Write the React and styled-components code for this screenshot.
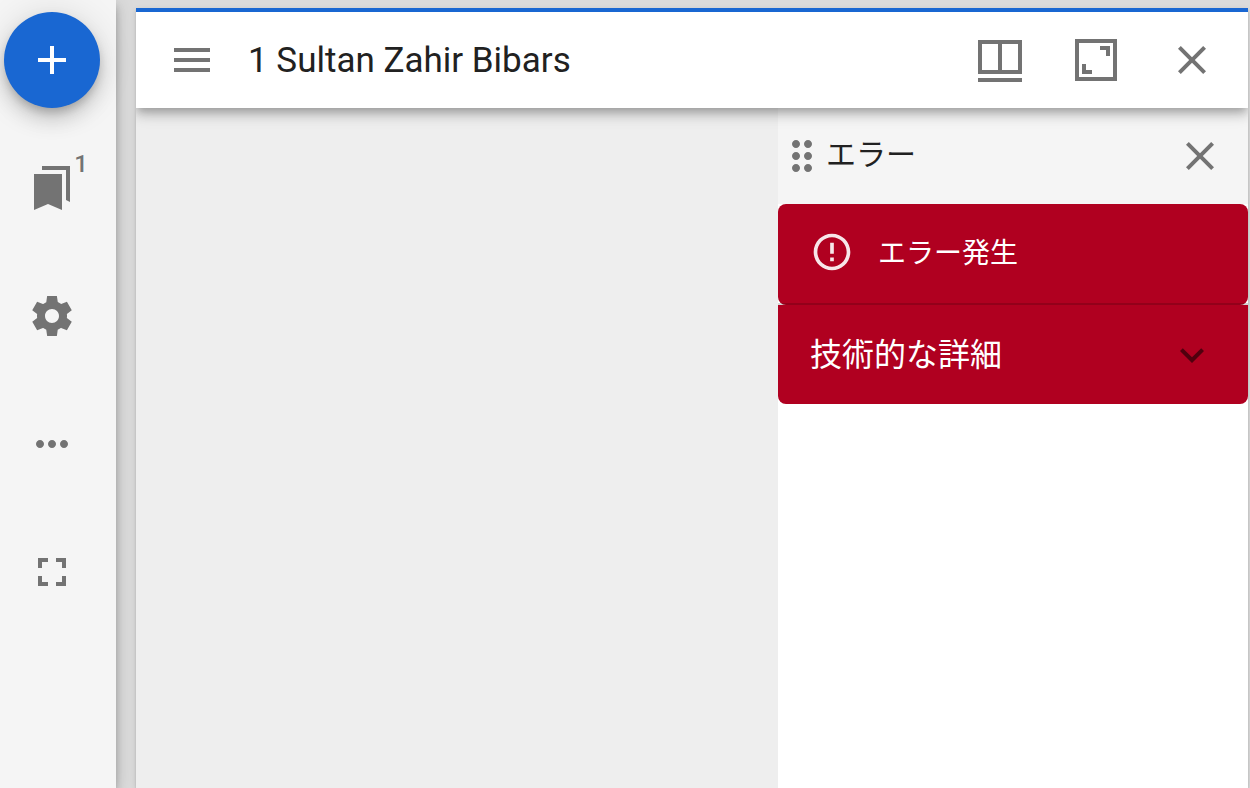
import React from 'react';
import styled, { createGlobalStyle } from 'styled-components';

const GlobalStyle = createGlobalStyle`
  *, *::before, *::after { box-sizing: border-box; }
  body {
    margin: 0;
    background: #dbdbdb;
    color: #212121;
    font-family: Roboto, "Noto Sans CJK JP", sans-serif;
  }
  h2, h3, p { margin: 0; font-weight: 400; }
`;

const Workspace = styled.div`
  display: flex;
  min-height: 100vh;
  overflow: hidden;
`;

const Sidebar = styled.nav`
  position: relative;
  z-index: 2;
  flex: 0 0 116px;
  display: flex;
  flex-direction: column;
  gap: 32px;
  padding: 12px 16px 12px 4px;
  background: #f5f5f5;
  box-shadow: 0 4px 8px -2px rgba(0, 0, 0, 0.2), 0 8px 10px rgba(0, 0, 0, 0.14),
    0 2px 20px rgba(0, 0, 0, 0.12);
`;

const IconButton = styled.button`
  position: relative;
  flex: none;
  display: flex;
  align-items: center;
  justify-content: center;
  width: 96px;
  height: 96px;
  padding: 0;
  border: 0;
  border-radius: 50%;
  background: transparent;
  color: #737373;
  cursor: pointer;
`;

const AddButton = styled(IconButton)`
  background: #1967d2;
  color: #fff;
  box-shadow: 0 6px 10px -2px rgba(0, 0, 0, 0.2), 0 12px 20px rgba(0, 0, 0, 0.14),
    0 2px 36px rgba(0, 0, 0, 0.12);
`;

const DragButton = styled(IconButton)`
  width: 48px;
  cursor: move;
`;

const Badge = styled.span`
  position: absolute;
  top: 10px;
  right: 12px;
  font-family: Roboto, sans-serif;
  font-size: 24px;
  font-weight: 500;
  line-height: 28px;
`;

const Icon = styled.svg`
  display: block;
  flex: none;
  width: ${(p) => p.$size || 48}px;
  height: ${(p) => p.$size || 48}px;
  fill: currentColor;
`;

const Main = styled.main`
  flex: 1;
  min-width: 0;
  display: flex;
  padding: 8px 2px 0 20px;
`;

const Window = styled.section`
  flex: 1;
  min-width: 0;
  display: flex;
  flex-direction: column;
  background: #eee;
  box-shadow: 0 4px 2px -2px rgba(0, 0, 0, 0.2), 0 2px 2px rgba(0, 0, 0, 0.14),
    0 2px 6px rgba(0, 0, 0, 0.12);
  clip-path: inset(-8px -8px 0 -8px);
`;

const TopBar = styled.header`
  position: relative;
  z-index: 1;
  display: flex;
  align-items: center;
  height: 100px;
  padding: 0 8px;
  border-top: 4px solid #1967d2;
  background: #fff;
  box-shadow: 0 4px 8px -2px rgba(0, 0, 0, 0.2), 0 8px 10px rgba(0, 0, 0, 0.14),
    0 2px 20px rgba(0, 0, 0, 0.12);
  clip-path: inset(0 0 -32px 0);
`;

const WindowTitle = styled.h2`
  flex: 1;
  min-width: 0;
  padding: 2px 0 0 8px;
  overflow: hidden;
  font-size: 35px;
  line-height: 48px;
  text-overflow: ellipsis;
  white-space: nowrap;
`;

const WindowBody = styled.div`
  flex: 1;
  display: flex;
`;

const Viewer = styled.div`
  flex: 1;
  min-width: 0;
`;

const Panel = styled.aside`
  flex: 0 0 470px;
  background: #fff;
`;

const PanelHeader = styled.header`
  display: flex;
  align-items: center;
  height: 96px;
  background: #f5f5f5;
`;

const PanelTitle = styled.h3`
  flex: 1;
  padding-bottom: 2px;
  font-size: 30px;
  line-height: 48px;
`;

const Alert = styled.div`
  display: flex;
  align-items: flex-start;
  gap: 24px;
  padding: 26px 32px 27px;
  border-radius: 8px;
  background: #b00020;
  color: #fff;
`;

const AlertIcon = styled.span`
  padding: 0 0 4px;
  opacity: 0.9;
`;

const AlertText = styled.p`
  font-size: 28px;
  line-height: 48px;
`;

const Summary = styled.button`
  position: relative;
  display: flex;
  align-items: center;
  justify-content: space-between;
  width: 100%;
  height: 99px;
  padding: 0 32px;
  border: 0;
  border-radius: 0 0 8px 8px;
  background: #b00020;
  color: #fff;
  font-family: inherit;
  font-size: 32px;
  line-height: 48px;
  text-align: left;
  cursor: pointer;

  &::before {
    content: "";
    position: absolute;
    top: -2px;
    right: 0;
    left: 0;
    height: 2px;
    background: rgba(0, 0, 0, 0.16);
  }
`;

const Chevron = styled(Icon)`
  color: rgba(0, 0, 0, 0.54);
`;

const paths = {
  add: 'M19 13h-6v6h-2v-6H5v-2h6V5h2v6h6v2z',
  bookmarks: 'M19 18l2 1V1H7v2h12v15zM17 5H3v18l7-3 7 3V5z',
  settings:
    'M19.44 12.99l-.01.02c.04-.33.08-.67.08-1.01 0-.34-.03-.66-.07-.99l.01.02 2.44-1.92-2.43-4.22-2.87 1.16.01.01c-.52-.4-1.09-.74-1.71-1h.01L14.44 2H9.57l-.44 3.07h.01c-.62.26-1.19.6-1.71 1l.01-.01-2.88-1.17-2.44 4.22 2.44 1.92.01-.02c-.04.33-.07.65-.07.99 0 .34.03.68.08 1.01l-.01-.02-2.1 1.65-.33.26 2.43 4.2 2.88-1.15-.02-.04c.53.41 1.1.75 1.73 1.01h-.03L9.58 22h4.85s.03-.18.06-.42l.38-2.65h-.01c.62-.26 1.2-.6 1.73-1.01l-.02.04 2.88 1.15 2.43-4.2s-.14-.12-.33-.26l-2.11-1.66zM12 15.5c-1.93 0-3.5-1.57-3.5-3.5s1.57-3.5 3.5-3.5 3.5 1.57 3.5 3.5-1.57 3.5-3.5 3.5z',
  more:
    'M6 10c-1.1 0-2 .9-2 2s.9 2 2 2 2-.9 2-2-.9-2-2-2zm12 0c-1.1 0-2 .9-2 2s.9 2 2 2 2-.9 2-2-.9-2-2-2zm-6 0c-1.1 0-2 .9-2 2s.9 2 2 2 2-.9 2-2-.9-2-2-2z',
  fullscreen:
    'M7 14H5v5h5v-2H7v-3zm-2-4h2V7h3V5H5v5zm12 7h-3v2h5v-5h-2v3zM14 5v2h3v3h2V5h-5z',
  menu: 'M3 18h18v-2H3v2zm0-5h18v-2H3v2zm0-7v2h18V6H3z',
  view: 'M1 2h22v17H1V2zm2 2v13h8V4H3zm10 0v13h8V4h-8zM1 21h22v2H1v-2z',
  maximize:
    'M1.5 1.5h21v21h-21v-21zm2 2v17h17v-17h-17zM14 5h5v5h-2V7h-3V5zM5 14h2v3h3v2H5v-5z',
  close:
    'M19 6.41L17.59 5 12 10.59 6.41 5 5 6.41 10.59 12 5 17.59 6.41 19 12 13.41 17.59 19 19 17.59 13.41 12z',
  drag:
    'M11 18c0 1.1-.9 2-2 2s-2-.9-2-2 .9-2 2-2 2 .9 2 2zm-2-8c-1.1 0-2 .9-2 2s.9 2 2 2 2-.9 2-2-.9-2-2-2zm0-6c-1.1 0-2 .9-2 2s.9 2 2 2 2-.9 2-2-.9-2-2-2zm6 4c1.1 0 2-.9 2-2s-.9-2-2-2-2 .9-2 2 .9 2 2 2zm0 2c-1.1 0-2 .9-2 2s.9 2 2 2 2-.9 2-2-.9-2-2-2zm0 6c-1.1 0-2 .9-2 2s.9 2 2 2 2-.9 2-2-.9-2-2-2z',
  error:
    'M11 15h2v2h-2zm0-8h2v6h-2zm.99-5C6.47 2 2 6.48 2 12s4.47 10 9.99 10C17.52 22 22 17.52 22 12S17.52 2 11.99 2zM12 20c-4.42 0-8-3.58-8-8s3.58-8 8-8 8 3.58 8 8-3.58 8-8 8z',
  expand: 'M16.59 8.59L12 13.17 7.41 8.59 6 10l6 6 6-6z',
};

const Glyph = ({ name, size, as: Component = Icon }) => (
  <Component viewBox="0 0 24 24" $size={size} aria-hidden="true">
    <path d={paths[name]} />
  </Component>
);

export default function App() {
  return (
    <Workspace lang="ja">
      <GlobalStyle />
      <Sidebar>
        <AddButton type="button" aria-label="リソースを追加">
          <Glyph name="add" />
        </AddButton>
        <IconButton type="button" aria-label="ウィンドウ一覧">
          <Glyph name="bookmarks" />
          <Badge>1</Badge>
        </IconButton>
        <IconButton type="button" aria-label="設定">
          <Glyph name="settings" />
        </IconButton>
        <IconButton type="button" aria-label="その他">
          <Glyph name="more" />
        </IconButton>
        <IconButton type="button" aria-label="全画面表示">
          <Glyph name="fullscreen" />
        </IconButton>
      </Sidebar>
      <Main>
        <Window>
          <TopBar>
            <IconButton type="button" aria-label="サイドバー">
              <Glyph name="menu" />
            </IconButton>
            <WindowTitle>1 Sultan Zahir Bibars</WindowTitle>
            <IconButton type="button" aria-label="表示設定">
              <Glyph name="view" />
            </IconButton>
            <IconButton type="button" aria-label="最大化">
              <Glyph name="maximize" />
            </IconButton>
            <IconButton type="button" aria-label="ウィンドウを閉じる">
              <Glyph name="close" />
            </IconButton>
          </TopBar>
          <WindowBody>
            <Viewer />
            <Panel>
              <PanelHeader>
                <DragButton type="button" aria-label="パネルを移動">
                  <Glyph name="drag" />
                </DragButton>
                <PanelTitle>エラー</PanelTitle>
                <IconButton type="button" aria-label="パネルを閉じる">
                  <Glyph name="close" />
                </IconButton>
              </PanelHeader>
              <Alert role="alert">
                <AlertIcon>
                  <Glyph name="error" size={44} />
                </AlertIcon>
                <AlertText>エラー発生</AlertText>
              </Alert>
              <Summary type="button" aria-expanded="false">
                技術的な詳細
                <Glyph name="expand" as={Chevron} />
              </Summary>
            </Panel>
          </WindowBody>
        </Window>
      </Main>
    </Workspace>
  );
}
